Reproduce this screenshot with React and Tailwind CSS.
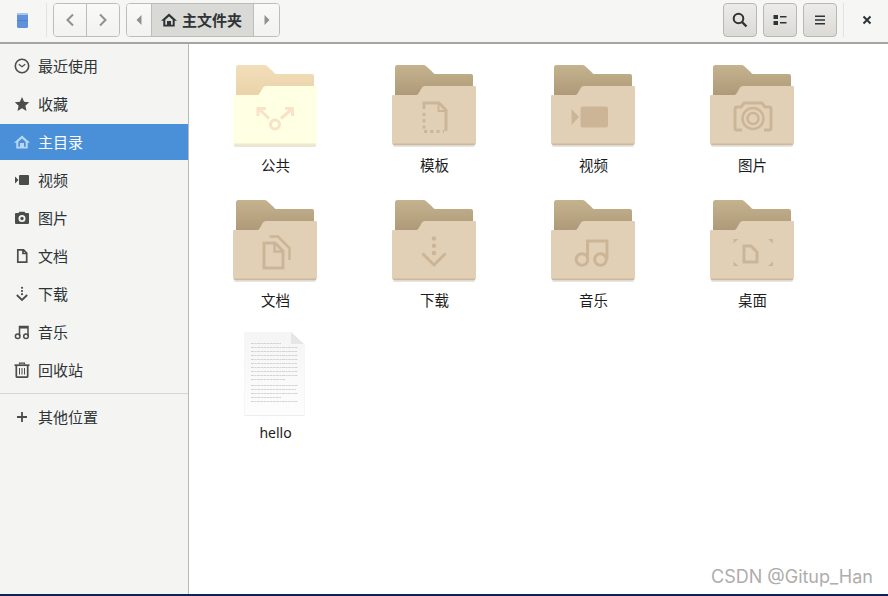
import React from "react";

const cjk = { fontFamily: '"Noto Sans CJK SC", "Noto Sans", sans-serif' };

function Folder({ light, children }) {
  const id = light ? "l" : "d";
  const accent = light ? "#f8e3c8" : "#ccb597";
  return (
    <svg width="84" height="84" viewBox="0 0 84 84" className="block -ml-px">
      <defs>
        <linearGradient id={`back${id}`} x1="0" y1="0" x2="0" y2="1">
          <stop offset="0" stopColor={light ? "#f3deba" : "#c5b28e"} />
          <stop offset="1" stopColor={light ? "#e9d3aa" : "#ae9a78"} />
        </linearGradient>
      </defs>
      <path d="M3 2.500Q3 0 5.500 0H31.500Q33 0 34 1L40 6.500Q42 9 43 9H79Q81 9 81 11V30H3Z" fill={`url(#back${id})`} />
      <rect x="1" y="79" width="82" height="3" rx="1.500" fill="#000" opacity="0.1" />
      <path d="M0 31Q0 30 1 30H24Q25.500 30 26.500 28.500L30 22.500Q31 21 33 21H83Q84 21 84 22V77Q84 80 81 80H3Q0 80 0 77Z" fill={light ? "#ffffe3" : "#e2d0b6"} />
      <path d="M0.300 78.500H83.700Q83.500 80.300 81 80.300H3Q0.500 80.300 0.300 78.500Z" fill={light ? "#f6e8bb" : "#cdb998"} />
      <g fill="none" stroke={accent} strokeWidth="3">{children}</g>
    </svg>
  );
}

const folderArt = {
  public: (
    <>
      <circle cx="42" cy="59.500" r="4.500" />
      <path d="M36 53.500L26 44M59 44L48 53.500" />
      <path d="M25 51V43.500H33M52 43.500H59.500V51" strokeWidth="3" />
    </>
  ),
  templates: (
    <>
      <path d="M32 44V38H47L54 45V66" />
      <path d="M46.500 38V46H54" strokeWidth="2" />
      <path d="M32 48V66.500H52" strokeDasharray="3 3.200" />
    </>
  ),
  video: (
    <>
      <rect x="29.500" y="41.500" width="27.500" height="21" rx="2" fill="#ccb597" stroke="none" />
      <path d="M20.500 44L28 52L20.500 60Z" fill="#ccb597" stroke="none" />
    </>
  ),
  pictures: (
    <>
      <path d="M32 65H27Q25 65 25 63V44Q25 42 27 42H31L34 38H52L55 42H59Q61 42 61 44V63Q61 65 59 65H54" />
      <circle cx="43" cy="53.500" r="10.500" strokeWidth="2.500" />
      <circle cx="43" cy="53.500" r="5.500" strokeWidth="2.500" />
    </>
  ),
  documents: (
    <>
      <path d="M31 43H42L50 51V68H31Z" />
      <path d="M41.500 43V51.500H50" strokeWidth="2.500" />
      <path d="M36.500 36.500H45L56.500 48V60" strokeWidth="2.500" />
    </>
  ),
  downloads: (
    <>
      <circle cx="42" cy="38.500" r="2.300" fill="#ccb597" stroke="none" />
      <circle cx="42" cy="45.800" r="2.300" fill="#ccb597" stroke="none" />
      <circle cx="42" cy="53" r="2.300" fill="#ccb597" stroke="none" />
      <path d="M30.500 53.500L42 65L53.500 53.500" strokeWidth="3" />
    </>
  ),
  music: (
    <>
      <circle cx="31" cy="59.500" r="5.800" />
      <circle cx="49.500" cy="59.500" r="5.800" />
      <path d="M36.500 59V41H56V59" />
    </>
  ),
  desktop: (
    <>
      <path d="M34 46H41L47 52V62H34Z" />
      <g fill="#ccb597" stroke="none">
        <path d="M23.500 39H28.500L23.500 43.500Z" />
        <path d="M63 39H58L63 43.500Z" />
        <path d="M23.500 66H28.500L23.500 61.500Z" />
        <path d="M63 66H58L63 61.500Z" />
      </g>
    </>
  ),
};

const items = [
  ["公共", "public"],
  ["模板", "templates"],
  ["视频", "video"],
  ["图片", "pictures"],
  ["文档", "documents"],
  ["下载", "downloads"],
  ["音乐", "music"],
  ["桌面", "desktop"],
];

function HomeIcon({ color, size = 16 }) {
  return (
    <svg width={size} height={size} viewBox="0 0 16 16" fill={color}>
      <path fillRule="evenodd" d="M8 1.500L0 8.800H2.300V14.500H13.700V8.800H16ZM8 4.500L11.700 7.800V12.800H10V9H6V12.800H4.300V7.800Z" />
    </svg>
  );
}

const c = "#4b4d4d";
const sideIcons = {
  recent: (
    <>
      <circle cx="8" cy="8" r="6.700" fill="none" stroke={c} strokeWidth="1.600" />
      <path d="M4.800 6.200L8 8.800L11.200 6.200" fill="none" stroke={c} strokeWidth="1.200" />
    </>
  ),
  star: <path d="M8 1L10.100 5.800L15.200 6.300L11.400 9.800L12.500 15L8 12.300L3.500 15L4.600 9.800L0.800 6.300L5.900 5.800Z" fill={c} />,
  video: (
    <>
      <rect x="5" y="3" width="10" height="10" rx="1" fill={c} />
      <path d="M1 4.500L4.500 8L1 11.500Z" fill={c} />
    </>
  ),
  camera: (
    <path fillRule="evenodd" fill={c} d="M2 3H4.500L5.500 1.800H10.500L11.500 3H14Q15 3 15 4V13Q15 14 14 14H2Q1 14 1 13V4Q1 3 2 3ZM8 5A3.500 3.500 0 1 0 8 12A3.500 3.500 0 1 0 8 5ZM8 6.800A1.700 1.700 0 1 1 8 10.200A1.700 1.700 0 1 1 8 6.800Z" />
  ),
  doc: <path d="M3.800 1.800H9.500L12.700 5V14.200H3.800Z M9 2V5.500H12.500" fill="none" stroke={c} strokeWidth="1.700" />,
  download: (
    <>
      <circle cx="8" cy="1.800" r="1.100" fill={c} />
      <circle cx="8" cy="5" r="1.100" fill={c} />
      <circle cx="8" cy="8.200" r="1.100" fill={c} />
      <path d="M2.800 9L8 14L13.200 9" fill="none" stroke={c} strokeWidth="1.800" />
    </>
  ),
  music: (
    <>
      <circle cx="3.700" cy="12.300" r="2.300" fill="none" stroke={c} strokeWidth="1.500" />
      <circle cx="12" cy="12.300" r="2.300" fill="none" stroke={c} strokeWidth="1.500" />
      <path d="M5.500 12V2.500H14V12" fill="none" stroke={c} strokeWidth="1.500" />
      <path d="M5.500 3.300H14" stroke={c} strokeWidth="2.500" />
    </>
  ),
  trash: (
    <>
      <path d="M5.500 2.500V1.200H10.500V2.500" fill="none" stroke={c} strokeWidth="1.200" />
      <path d="M0.500 3.200H15.500" stroke={c} strokeWidth="1.700" />
      <path d="M2.300 3.500V14.200Q2.300 15.200 3.300 15.200H12.700Q13.700 15.200 13.700 14.200V3.500" fill="none" stroke={c} strokeWidth="1.700" />
      <path d="M5.500 6V12.500M8 6V12.500M10.500 6V12.500" stroke={c} strokeWidth="1" />
    </>
  ),
  plus: <path d="M8 3V13M3 8H13" stroke={c} strokeWidth="1.800" />,
};

const sideItems = [
  ["最近使用", "recent"],
  ["收藏", "star"],
  ["主目录", "home", true],
  ["视频", "video"],
  ["图片", "camera"],
  ["文档", "doc"],
  ["下载", "download"],
  ["音乐", "music"],
  ["回收站", "trash"],
];

function SideRow({ label, icon, active }) {
  return (
    <div className={`h-9 mb-0.5 flex items-center pl-[14px] text-[15px] ${active ? "bg-[#4a90d9] text-white" : "text-[#2e3436]"}`}>
      <span className="w-4 h-4 mr-2 shrink-0 block">
        {icon === "home" ? (
          <HomeIcon color="#b9d6f4" />
        ) : (
          <svg width="16" height="16" viewBox="0 0 16 16">{sideIcons[icon]}</svg>
        )}
      </span>
      <span>{label}</span>
    </div>
  );
}

const btnIdle = "bg-gradient-to-b from-[#f9f9f8] to-[#f2f2f1]";
const btnTool = "w-[34px] h-[34px] rounded-[4px] border border-[#b8b8b3] bg-gradient-to-b from-[#ecebe9] to-[#dbdad6] flex items-center justify-center";

function FileIcon() {
  const rows = [12, 16, 20, 24, 28, 32, 36, 40, 44, 48, 54, 58, 62, 66, 70];
  const lens = [30, 47, 46, 47, 47, 46, 47, 47, 47, 34, 47, 45, 47, 30, 47];
  return (
    <svg width="62" height="86" viewBox="0 0 62 86" className="block -ml-px">
      <defs>
        <linearGradient id="paper" x1="0" y1="0" x2="0" y2="1">
          <stop offset="0" stopColor="#f5f5f5" />
          <stop offset="1" stopColor="#fdfdfd" />
        </linearGradient>
      </defs>
      <path d="M0.500 1.500H47L60.500 14V85H0.500Z" fill="#000" opacity="0.07" />
      <path d="M1 1H47L60 13V84H1Z" fill="url(#paper)" />
      <path d="M47 1V13H60Z" fill="#e6e6e6" />
      {rows.map((y, i) => (
        <path key={y} d={`M7 ${y + 0.5}H${7 + lens[i]}`} stroke="#c9c9c9" strokeWidth="0.800" strokeDasharray="3 0.600 2 0.600" />
      ))}
    </svg>
  );
}

export default function App() {
  return (
    <div className="relative w-[888px] h-[596px] flex flex-col bg-white overflow-hidden" style={cjk}>
      <header className="h-[44px] shrink-0 flex items-start border-b-2 border-[#a5a5a2] bg-[#f6f6f5] pt-[3px]">
        <div className="w-[46px] h-[34px] flex items-center pl-[17px]">
          <svg width="11" height="15" viewBox="0 0 11 15">
            <rect x="0" y="0" width="11" height="15" rx="1.500" fill="#5f92da" />
            <rect x="0" y="0" width="11" height="2" rx="1" fill="#a9c4ea" />
            <path d="M0 7.500H11" stroke="#4a7cc4" strokeWidth="0.800" />
          </svg>
        </div>
        <div className="w-px h-[34px] bg-[#e3e3e1]" />
        <div className="ml-[6px] flex h-[34px] w-[67px] rounded-[4px] border border-[#bdbdb9] overflow-hidden">
          <div className={`w-[33px] border-r border-[#bdbdb9] flex items-center justify-center ${btnIdle}`}>
            <svg width="12" height="14" viewBox="0 0 12 14"><path d="M9 1.500L3.500 7L9 12.500" fill="none" stroke="#8f9191" strokeWidth="2" /></svg>
          </div>
          <div className={`flex-1 flex items-center justify-center ${btnIdle}`}>
            <svg width="12" height="14" viewBox="0 0 12 14"><path d="M3 1.500L8.500 7L3 12.500" fill="none" stroke="#8f9191" strokeWidth="2" /></svg>
          </div>
        </div>
        <div className="ml-[6px] flex h-[34px] w-[154px] rounded-[4px] border border-[#bdbdb9] overflow-hidden">
          <div className={`w-[24px] flex items-center justify-center ${btnIdle}`}>
            <svg width="6" height="10" viewBox="0 0 6 10"><path d="M5.500 0V10L0.500 5Z" fill="#8f9191" /></svg>
          </div>
          <div className="flex-1 bg-[#d9d9d6] border-x border-[#bdbdb9] flex items-center justify-center gap-[5px] pr-[2px] text-[15px] font-bold text-[#2e3436]">
            <HomeIcon color="#2e3436" />
            <span>主文件夹</span>
          </div>
          <div className={`w-[25px] flex items-center justify-center ${btnIdle}`}>
            <svg width="6" height="10" viewBox="0 0 6 10"><path d="M0.500 0V10L5.500 5Z" fill="#8f9191" /></svg>
          </div>
        </div>
        <div className="flex-1" />
        <div className={btnTool}>
          <svg width="16" height="16" viewBox="0 0 16 16"><circle cx="6.500" cy="6.500" r="4.800" fill="none" stroke="#2e3436" strokeWidth="2" /><path d="M10 10L14.500 14.500" stroke="#2e3436" strokeWidth="2.400" /></svg>
        </div>
        <div className={`ml-[6px] ${btnTool}`}>
          <svg width="14" height="12" viewBox="0 0 14 12"><path d="M0.500 1H5V5H0.500ZM0.500 7H5V11H0.500ZM7 2H13.500V3.500H7ZM7 8H13.500V9.500H7Z" fill="#2e3436" /></svg>
        </div>
        <div className={`ml-[6px] ${btnTool}`}>
          <svg width="12" height="12" viewBox="0 0 12 12"><path d="M1 1.500H11V3H1ZM1 5.200H11V6.800H1ZM1 9H11V10.500H1Z" fill="#2e3436" /></svg>
        </div>
        <div className="ml-[6px] w-px h-[34px] bg-[#e3e3e1]" />
        <div className="w-[44px] h-[34px] flex items-center justify-center pl-[2px]">
          <svg width="10" height="10" viewBox="0 0 10 10"><path d="M1.500 1.500L8.500 8.500M8.500 1.500L1.500 8.500" stroke="#2e3436" strokeWidth="2" /></svg>
        </div>
      </header>

      <div className="flex-1 flex min-h-0">
        <aside className="w-[189px] shrink-0 bg-[#f4f4f3] border-r border-[#b9b9b6] pt-1">
          {sideItems.map(([l, i, a]) => (
            <SideRow key={l} label={l} icon={i} active={a} />
          ))}
          <div className="h-px bg-[#d6d6d4] mt-[5px] mb-[5px]" />
          <SideRow label="其他位置" icon="plus" />
        </aside>
        <main className="flex-1 pl-[7px] pt-[21px] grid grid-cols-[repeat(4,159px)] auto-rows-[135px] content-start">
          {items.map(([label, key]) => (
            <div key={label} className="flex flex-col items-center">
              <Folder light={key === "public"}>{folderArt[key]}</Folder>
              <div className="mt-[6px] text-[14.500px] leading-5 text-[#1c1c1c]">{label}</div>
            </div>
          ))}
          <div className="flex flex-col items-center -mt-1">
            <FileIcon />
            <div className="mt-[6px] text-[14px] leading-5 text-[#1c1c1c]" style={{ fontFamily: '"Noto Sans", sans-serif' }}>hello</div>
          </div>
        </main>
      </div>

      <div className="h-[2px] shrink-0 bg-[#0b2352]" />
      <div className="absolute left-[711px] top-[565px] text-[18px] leading-6 text-[#adadad] whitespace-nowrap" style={{ fontFamily: 'Inter, sans-serif' }}>CSDN @Gitup_Han</div>
    </div>
  );
}
